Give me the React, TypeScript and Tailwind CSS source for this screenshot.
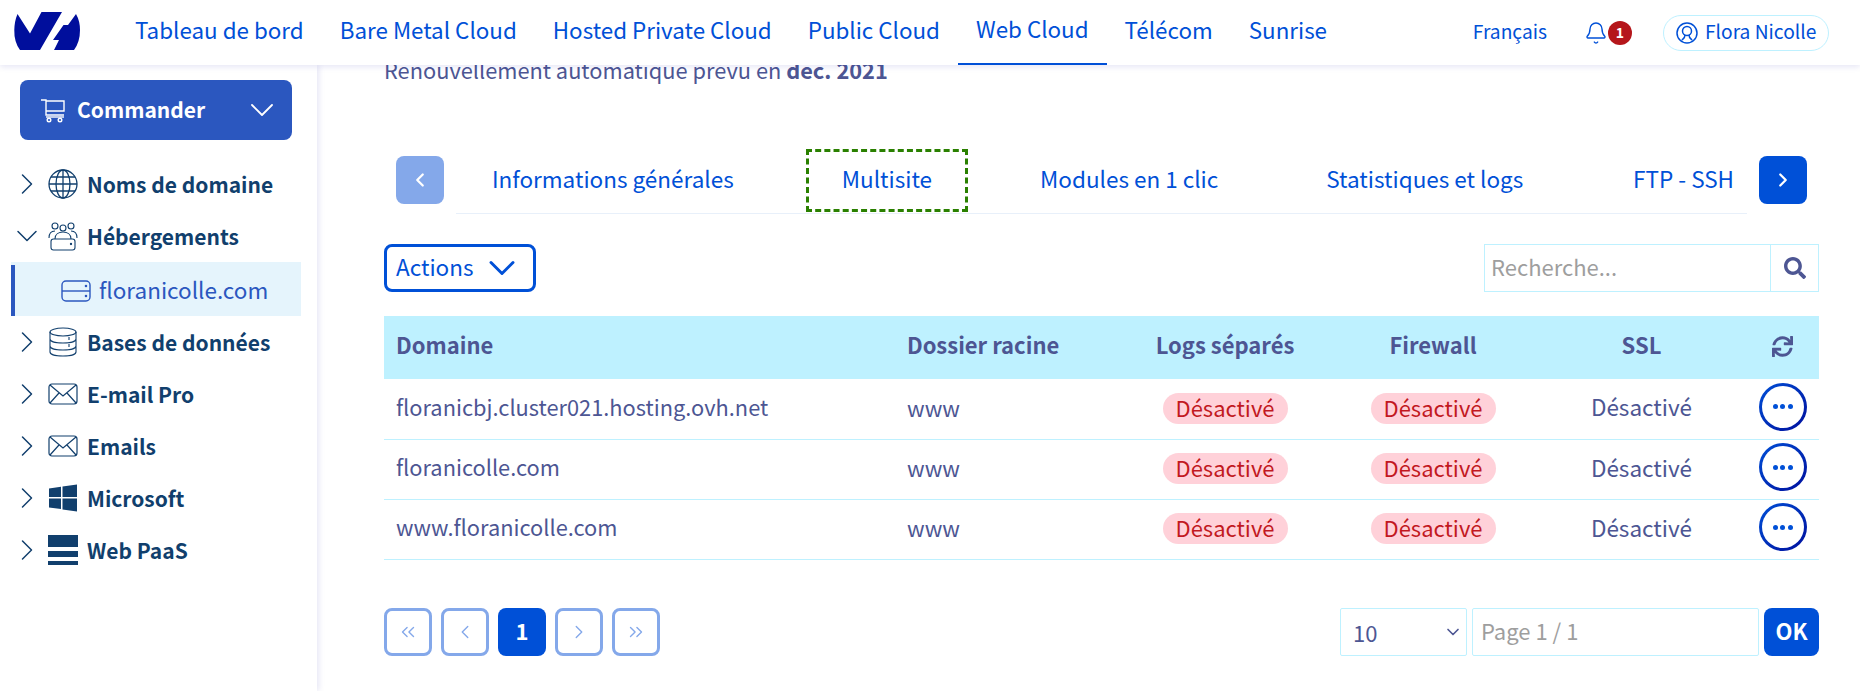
import React from 'react';
import { ChevronDown, ChevronLeft, ChevronRight, ChevronsLeft, ChevronsRight, Bell } from 'lucide-react';
import { FaSearch, FaSync } from 'react-icons/fa';

const font = { fontFamily: '"Noto Sans CJK SC", "Noto Sans", sans-serif' };

const navItems = ['Tableau de bord', 'Bare Metal Cloud', 'Hosted Private Cloud', 'Public Cloud', 'Web Cloud', 'Télécom', 'Sunrise'];

const Logo = () => (
  <svg width="68" height="40" viewBox="13 11 68 40" fill="#000e9c">
    <path d="M17.5 14 30 33.5 41.5 12H62L40 50H20Q14 42 14.3 30 14.5 21 17.5 14Z" />
    <path d="M76 14Q80 21 80 30 80 42 74 50H54L59 40H53L63.5 25H68Z" />
  </svg>
);

const Cart = () => (
  <svg width="26" height="26" viewBox="0 0 26 26" fill="none" stroke="#fff" strokeWidth="1.4">
    <path d="M1 3h5v15h18M6 4h18v10H6" />
    <path d="M6 20h18" />
    <circle cx="9" cy="23" r="1.8" />
    <circle cx="20" cy="23" r="1.8" />
  </svg>
);

const Globe = () => (
  <svg width="30" height="30" viewBox="0 0 30 30" fill="none" stroke="#113f6d" strokeWidth="1.3">
    <circle cx="15" cy="15" r="14" />
    <ellipse cx="15" cy="15" rx="7" ry="14" />
    <path d="M15 1v28M1 15h28M3 8h24M3 22h24" />
  </svg>
);

const Team = () => (
  <svg width="30" height="30" viewBox="0 0 30 30" fill="none" stroke="#113f6d" strokeWidth="1.1">
    <circle cx="7" cy="5" r="3" />
    <circle cx="15" cy="7" r="3" />
    <circle cx="23" cy="5" r="3" />
    <path d="M1 17c0-5 3-7 6-7M29 17c0-5-3-7-6-7M7 18c0-5 4-7 8-7s8 2 8 7" />
    <rect x="3" y="18" width="24" height="11" rx="2.5" />
    <circle cx="23" cy="23" r=".6" fill="#113f6d" />
  </svg>
);

const Server = () => (
  <svg width="30" height="22" viewBox="0 0 30 22" fill="none" stroke="#2b57bf" strokeWidth="1.4">
    <rect x="1" y="1" width="28" height="20" rx="4" />
    <path d="M1 11h28" />
    <circle cx="25" cy="6" r=".6" fill="#2b57bf" />
    <circle cx="25" cy="16" r=".6" fill="#2b57bf" />
  </svg>
);

const Database = () => (
  <svg width="30" height="30" viewBox="0 0 30 30" fill="none" stroke="#113f6d" strokeWidth="1.1">
    <ellipse cx="15" cy="5" rx="13" ry="4" />
    <path d="M2 5v20c0 2.500 6 4 13 4s13-1.500 13-4V5M2 12c0 2.500 6 4 13 4s13-1.500 13-4M2 19c0 2.500 6 4 13 4s13-1.500 13-4" />
    <path d="M21 10v3M21 17v3" />
  </svg>
);

const Mail = () => (
  <svg width="30" height="22" viewBox="0 0 30 22" fill="none" stroke="#113f6d" strokeWidth="1.2">
    <rect x="1" y="1" width="28" height="20" rx="3" />
    <path d="M2 2l13 11L28 2M2 20l9-10M28 20l-9-10" />
  </svg>
);

const Windows = () => (
  <svg width="28" height="28" viewBox="0 0 28 28" fill="#113f6d">
    <path d="M0 4.500 12 2.800V13H0ZM13.500 2.600 28 .5V13H13.500ZM0 14.500H12V25L0 23.500ZM13.500 14.500H28V27.500L13.500 25.500Z" />
  </svg>
);

const Paas = () => (
  <svg width="30" height="30" viewBox="0 0 30 30" fill="#113f6d">
    <path d="M0 0h30v12H0ZM0 16h30v6H0ZM0 26h30v4H0Z" />
  </svg>
);

const sideItems: { label: string; icon: React.ReactNode; open?: boolean }[] = [
  { label: 'Noms de domaine', icon: <Globe /> },
  { label: 'Hébergements', icon: <Team />, open: true },
  { label: 'Bases de données', icon: <Database /> },
  { label: 'E-mail Pro', icon: <Mail /> },
  { label: 'Emails', icon: <Mail /> },
  { label: 'Microsoft', icon: <Windows /> },
  { label: 'Web PaaS', icon: <Paas /> },
];

const SideRow = ({ label, icon, open }: { label: string; icon: React.ReactNode; open?: boolean }) => (
  <div className="flex items-center h-[52px] pl-[17px]">
    <span className="w-[20px] flex justify-center">
      {open ? (
        <ChevronDown size={36} strokeWidth={1} className="text-[#113f6d] shrink-0" />
      ) : (
        <ChevronRight size={36} strokeWidth={1} className="text-[#113f6d] shrink-0" />
      )}
    </span>
    <span className="w-[30px] ml-[11px] flex justify-center">{icon}</span>
    <span className="ml-[9px] text-[21px] leading-[26px] font-semibold text-[#113f6d] -mt-[1px]">{label}</span>
  </div>
);

const Sidebar = () => (
  <aside className="w-[317px] shrink-0 bg-white shadow-[2px_0_6px_rgba(0,14,156,0.1)] pt-[15px]">
    <div className="pl-[20px] w-[292px]">
      <button className="flex items-center w-[272px] h-[60px] rounded-lg bg-[#2b57bf] text-white pl-[20px] pr-[10px] text-[21px] font-semibold">
        <Cart />
        <span className="ml-[11px]">Commander</span>
        <ChevronDown size={40} strokeWidth={1.1} className="ml-auto" />
      </button>
    </div>
    <div className="mt-[18px]">
      {sideItems.map((item) => (
        <div key={item.label}>
          <SideRow {...item} />
          {item.open && (
            <div className="ml-[11px] w-[290px] h-[54px] pt-[3px] bg-[#e5f4fc]">
              <div className="h-[51px] border-l-4 border-[#2b57bf] pl-[46px] flex items-center gap-[8px] text-[#2b57bf] text-[22.5px]">
                <Server />
                <span className="-mt-[2px]">floranicolle.com</span>
              </div>
            </div>
          )}
        </div>
      ))}
    </div>
  </aside>
);

const Tabs = () => (
  <div className="flex mt-[72px] ml-[12px] w-[1411px]">
    <button className="w-[48px] h-[48px] rounded-lg bg-[#84a8ea] text-white flex items-center justify-center shrink-0">
      <ChevronLeft size={22} strokeWidth={2.5} />
    </button>
    <div className="ml-[12px] w-[1291px] h-[58px] border-b border-[#e8f0fa] flex items-center pb-[12px] text-[#0050d7] text-[22.5px]">
      <span className="ml-[36px]">Informations générales</span>
      <span className="ml-[72px] px-[33px] pb-[3px] h-[63px] self-start -mt-[7px] flex items-center border-[3px] border-dashed border-[#2a8000]">Multisite</span>
      <span className="ml-[72px]">Modules en 1 clic</span>
      <span className="ml-[108px]">Statistiques et logs</span>
      <span className="ml-auto mr-[13px]">FTP - SSH</span>
    </div>
    <button className="ml-[12px] w-[48px] h-[48px] rounded-lg bg-[#0050d7] text-white flex items-center justify-center shrink-0">
      <ChevronRight size={22} strokeWidth={2.5} />
    </button>
  </div>
);

const rows = ['floranicbj.cluster021.hosting.ovh.net', 'floranicolle.com', 'www.floranicolle.com'];

const Badge = () => (
  <span className="inline-block h-[31px] w-[125px] rounded-full bg-[#ffd1d9] text-[#c2191f] leading-[28px] text-[22px] align-middle">Désactivé</span>
);

const RowMenu = () => (
  <button className="w-[48px] h-[48px] rounded-full bg-[linear-gradient(135deg,#0050d7,#000e9c)] p-[3px] inline-block align-middle">
    <span className="w-full h-full rounded-full bg-white flex items-center justify-center gap-[2.500px]">
      <span className="w-[5px] h-[5px] rounded-full bg-[#0050d7]" />
      <span className="w-[5px] h-[5px] rounded-full bg-[#0050d7]" />
      <span className="w-[5px] h-[5px] rounded-full bg-[#0050d7]" />
    </span>
  </button>
);

const Table = () => (
  <table className="w-[1435px] table-fixed border-collapse mt-[24px] text-[#4d5693] text-[22px]">
    <colgroup>
      <col className="w-[511px]" />
      <col className="w-[226px]" />
      <col className="w-[208px]" />
      <col className="w-[208px]" />
      <col className="w-[209px]" />
      <col className="w-[73px]" />
    </colgroup>
    <thead>
      <tr className="h-[63px] bg-[#bef1ff] font-semibold text-left">
        <th className="pl-[12px] pb-[6px] font-semibold">Domaine</th>
        <th className="pl-[12px] pb-[6px] font-semibold">Dossier racine</th>
        <th className="text-center pb-[6px] font-semibold">Logs séparés</th>
        <th className="text-center pb-[6px] font-semibold">Firewall</th>
        <th className="text-center pb-[6px] font-semibold">SSL</th>
        <th className="pb-[3px] font-semibold">
          <FaSync size={21} className="mx-auto" />
        </th>
      </tr>
    </thead>
    <tbody>
      {rows.map((name) => (
        <tr key={name} className="h-[60px] border-b border-[#bef1ff]">
          <td className="pl-[12px] pb-[3px] text-[21.8px]">{name}</td>
          <td className="pl-[12px] pb-[3px]">www</td>
          <td className="text-center pb-[5px]"><Badge /></td>
          <td className="text-center pb-[5px]"><Badge /></td>
          <td className="text-center pb-[3px] text-[22.5px]">Désactivé</td>
          <td className="text-center pb-[4px]"><RowMenu /></td>
        </tr>
      ))}
    </tbody>
  </table>
);

const PageButton = ({ children }: { children: React.ReactNode }) => (
  <button className="w-[48px] h-[48px] rounded-lg border-[3px] border-[#84a8ea] text-[#84a8ea] flex items-center justify-center bg-white">
    {children}
  </button>
);

const Pagination = () => (
  <div className="flex justify-between mt-[48px] w-[1435px]">
    <div className="flex gap-[9px]">
      <PageButton><ChevronsLeft size={22} strokeWidth={1.5} /></PageButton>
      <PageButton><ChevronLeft size={22} strokeWidth={1.5} /></PageButton>
      <button className="w-[48px] h-[48px] rounded-lg bg-[#0050d7] text-white font-bold text-[22px] pb-[2px]">1</button>
      <PageButton><ChevronRight size={22} strokeWidth={1.5} /></PageButton>
      <PageButton><ChevronsRight size={22} strokeWidth={1.5} /></PageButton>
    </div>
    <div className="flex gap-[5px]">
      <div className="w-[127px] h-[48px] border border-[#bef1ff] flex items-center pl-[12px] pr-[3px] text-[#4d5693] text-[22px] rounded-[2px]">
        <span className="mt-[1px]">10</span>
        <ChevronDown size={20} strokeWidth={2} className="ml-auto" />
      </div>
      <div className="w-[287px] h-[48px] border border-[#bef1ff] flex items-center pl-[8px] pb-[3px] text-[#9e9e9e] text-[22px] rounded-[2px]">Page 1 / 1</div>
      <button className="w-[55px] h-[48px] rounded-lg bg-[#0050d7] text-white font-bold text-[22px] pb-[2px]">OK</button>
    </div>
  </div>
);

export default function App() {
  return (
    <div style={font} className="w-[1860px] h-[691px] overflow-hidden flex flex-col bg-white">
      <header className="h-[65px] shrink-0 bg-white shadow-[0_2px_6px_rgba(0,14,156,0.1)] z-10 flex items-center">
        <div className="ml-[13px] w-[68px] h-[40px] -mt-[4px]"><Logo /></div>
        <nav className="ml-[36px] flex text-[#0050d7] text-[22.4px] h-full">
          {navItems.map((item) => (
            <a key={item} className={`px-[18px] pb-[6px] flex items-center h-full ${item === 'Web Cloud' ? 'border-b-2 border-[#0050d7]' : ''}`}>
              {item}
            </a>
          ))}
        </nav>
        <div className="ml-auto flex items-center text-[#0050d7] text-[19.2px]">
          <span className="pb-[3px]">Français</span>
          <Bell size={24} strokeWidth={1.4} className="ml-[37px]" />
          <span className="w-[24px] h-[24px] rounded-full bg-[#b5161b] text-white text-[14px] font-bold flex items-center justify-center">1</span>
          <div className="ml-[31px] mr-[31px] h-[36px] w-[166px] rounded-full border border-[#bef1ff] flex items-center pl-[12px]">
            <svg width="22" height="22" viewBox="0 0 22 22" fill="none" stroke="#0050d7" strokeWidth="1.5">
              <circle cx="11" cy="11" r="10" />
              <circle cx="11" cy="9" r="4.500" />
              <path d="M9 13c0 3-2 4-3 5M13 13c0 3 2 4 3 5" />
            </svg>
            <span className="ml-[7px] pb-[3px]">Flora Nicolle</span>
          </div>
        </div>
      </header>
      <div className="flex flex-1 min-h-0">
        <Sidebar />
        <main className="flex-1 pl-[67px] min-w-0">
          <p className="-mt-[8px] text-[21.8px] leading-[26px] text-[#4d5693]">
            Renouvellement automatique prévu en <b className="font-semibold">dec. 2021</b>
          </p>
          <div className="h-[1px]" />
          <Tabs />
          <div className="flex justify-between items-center w-[1435px] mt-[30px]">
            <button className="h-[48px] w-[152px] rounded-lg border-[3px] border-[#0050d7] text-[#0050d7] text-[22.5px] flex items-center pl-[9px]">
              <span className="pb-[3px]">Actions</span>
              <ChevronDown size={44} strokeWidth={1.6} className="ml-[7px]" />
            </button>
            <div className="flex w-[335px] h-[48px] border border-[#bef1ff]">
              <span className="flex-1 pl-[6px] pb-[3px] flex items-center text-[22px] text-[#9e9e9e]">Recherche...</span>
              <span className="w-[48px] border-l border-[#bef1ff] flex items-center justify-center">
                <FaSearch size={22} className="text-[#4d5693]" />
              </span>
            </div>
          </div>
          <Table />
          <Pagination />
        </main>
      </div>
    </div>
  );
}
